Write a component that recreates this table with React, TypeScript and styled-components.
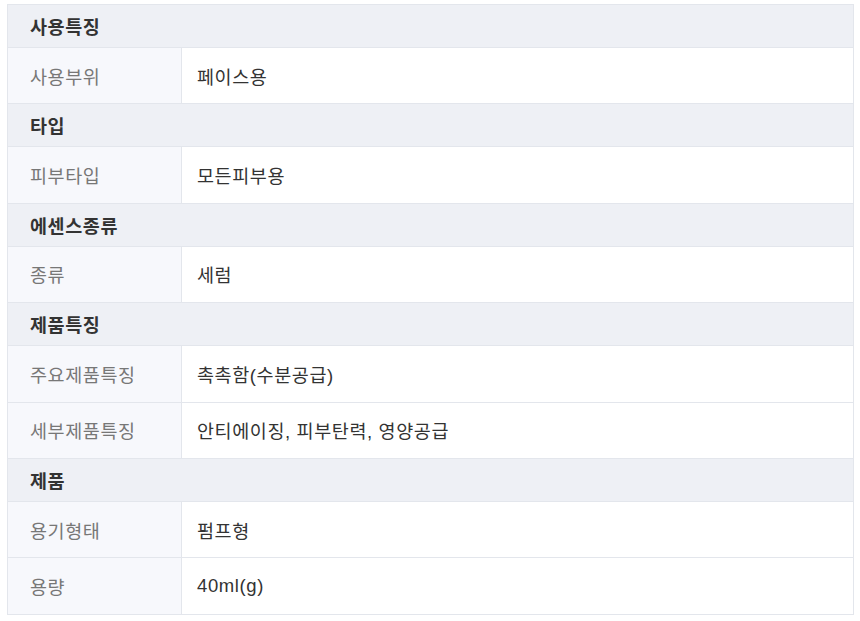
import React from 'react'
import styled, { createGlobalStyle } from 'styled-components'

const GlobalStyle = createGlobalStyle`
  body {
    margin: 0;
    background: #ffffff;
    font-family: 'Liberation Sans', 'Noto Sans CJK KR', sans-serif;
    letter-spacing: 0.6px;
  }
`

const Wrapper = styled.div`
  padding: 4px 8px 0 7px;
`

const Table = styled.div`
  width: 845px;
  border: 1px solid #e3e6ec;
  border-bottom: none;
`

const SectionRow = styled.div`
  height: 42px;
  display: flex;
  align-items: center;
  padding-left: 22px;
  background: #eef0f5;
  border-bottom: 1px solid #e3e6ec;
  font-size: 18.5px;
  font-weight: 700;
  color: #333;
`

const Row = styled.div`
  display: grid;
  grid-template-columns: 174px 1fr;
  height: 55.4px;
  border-bottom: 1px solid #e3e6ec;
`

const Label = styled.div`
  display: flex;
  align-items: center;
  padding-left: 22px;
  background: #f7f8fc;
  border-right: 1px solid #e3e6ec;
  font-size: 18.5px;
  color: #777;
`

const Value = styled.div`
  display: flex;
  align-items: center;
  padding-left: 15px;
  font-size: 18.5px;
  color: #333;
`

type Section = {
  title: string
  rows: Array<[string, string]>
}

const sections: Array<Section> = [
  { title: '사용특징', rows: [['사용부위', '페이스용']] },
  { title: '타입', rows: [['피부타입', '모든피부용']] },
  { title: '에센스종류', rows: [['종류', '세럼']] },
  {
    title: '제품특징',
    rows: [
      ['주요제품특징', '촉촉함(수분공급)'],
      ['세부제품특징', '안티에이징, 피부탄력, 영양공급'],
    ],
  },
  {
    title: '제품',
    rows: [
      ['용기형태', '펌프형'],
      ['용량', '40ml(g)'],
    ],
  },
]

export default function App() {
  return (
    <Wrapper>
      <GlobalStyle />
      <Table>
        {sections.map((section) => (
          <React.Fragment key={section.title}>
            <SectionRow>{section.title}</SectionRow>
            {section.rows.map(([label, value]) => (
              <Row key={label}>
                <Label>{label}</Label>
                <Value>{value}</Value>
              </Row>
            ))}
          </React.Fragment>
        ))}
      </Table>
    </Wrapper>
  )
}
